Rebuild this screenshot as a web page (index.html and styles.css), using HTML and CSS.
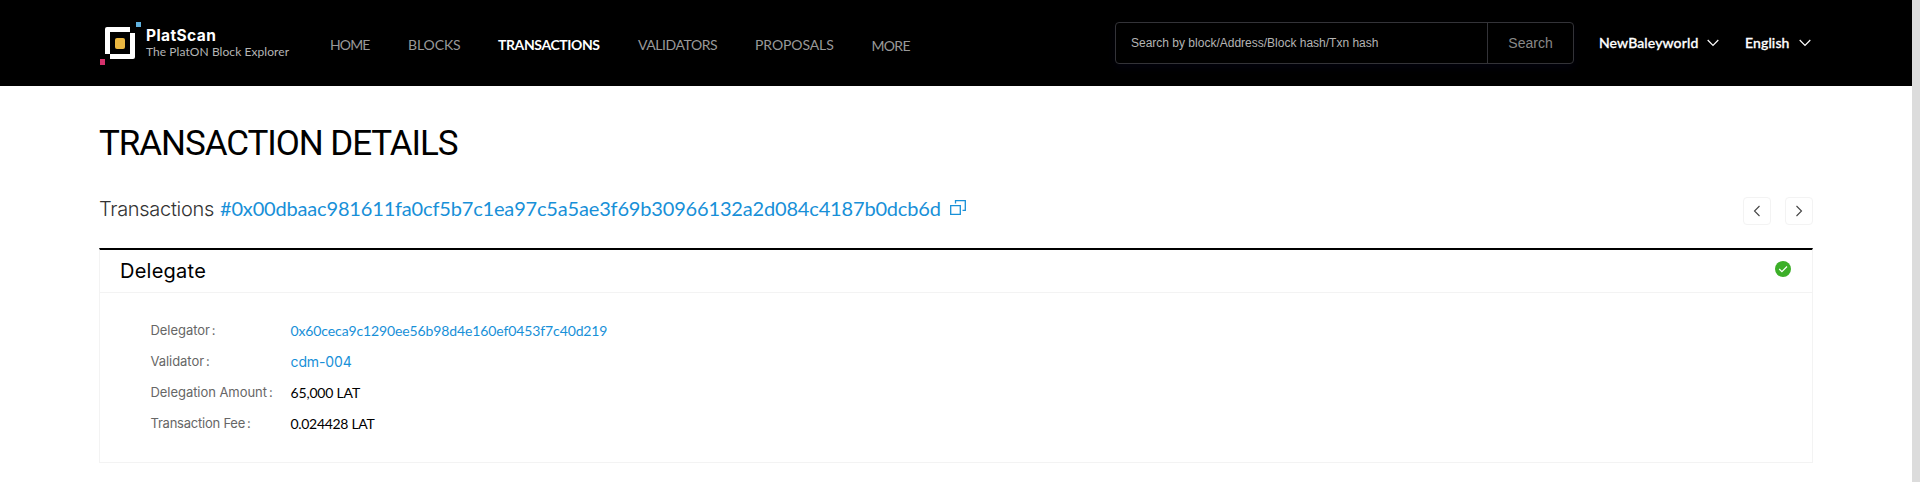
FILE: index.html
```html
<!DOCTYPE html>
<html lang="en">
<head>
<meta charset="utf-8">
<title>PlatScan - Transaction Details</title>
<link rel="stylesheet" href="styles.css">
</head>
<body>
<div class="viewport">
<div class="page">
  <header class="header">
    <a class="brand">
      <svg class="logo" width="42" height="44" viewBox="0 0 42 44">
        <path fill="#fff" d="M7 5h23v5H10v22H5V7q0-2 2-2z"/>
        <path fill="#fff" d="M30 11h5v24q0 2-2 2H10v-5h20z"/>
        <rect x="15" y="16" width="10" height="11" rx="2" fill="#ebb741"/>
        <path fill="#60b1df" d="M36 0h5v5h-5z"/>
        <path fill="#d4316b" d="M0 37h5v6H0z"/>
      </svg>
      <span class="brand-text"><b class="brand-name">PlatScan</b><span class="tagline">The PlatON Block Explorer</span></span>
    </a>
    <nav class="nav">
      <a class="home">HOME</a><a class="blocks">BLOCKS</a><a class="active">TRANSACTIONS</a><a class="validators">VALIDATORS</a><a class="proposals">PROPOSALS</a><a class="more">MORE</a>
    </nav>
    <div class="search">
      <span class="search-input">Search by block/Address/Block hash/Txn hash</span><span class="search-button">Search</span>
    </div>
    <div class="select network">NewBaleyworld<svg width="12" height="8" viewBox="0 0 12 8"><path d="M.7 1l5.3 5.5L11.300 1"/></svg></div>
    <div class="select language">English<svg width="12" height="8" viewBox="0 0 12 8"><path d="M.7 1l5.3 5.5L11.300 1"/></svg></div>
  </header>
  <main class="main">
    <h1 class="title">TRANSACTION DETAILS</h1>
    <div class="subject">
      <span class="subject-label">Transactions</span>
      <span class="subject-hash">#0x00dbaac981611fa0cf5b7c1ea97c5a5ae3f69b30966132a2d084c4187b0dcb6d</span>
      <svg class="copy" width="16" height="16" viewBox="0 0 16 16"><path d="M.7 5.700h9.600v8.600H.7zM5.500 3.500V.700h9.800v9.600h-2.800"/></svg>
      <span class="pager">
        <span class="pager-button"><svg width="8" height="12" viewBox="0 0 8 12"><path d="M6.500 1l-5 5 5 5"/></svg></span>
        <span class="pager-button"><svg width="8" height="12" viewBox="0 0 8 12"><path d="M1.500 1l5 5-5 5"/></svg></span>
      </span>
    </div>
    <section class="card">
      <div class="card-head">
        <h2 class="card-title">Delegate</h2>
        <svg class="status" width="16" height="16" viewBox="0 0 16 16"><circle cx="8" cy="8" r="8" fill="#3caf28"/><path d="M4.200 8l2.700 2.700L12 5.500" fill="none" stroke="#fff" stroke-width="1.200"/></svg>
      </div>
      <dl class="details">
        <dt>Delegator<i>:</i></dt><dd class="link v1">0x60ceca9c1290ee56b98d4e160ef0453f7c40d219</dd>
        <dt>Validator<i>:</i></dt><dd class="link v2">cdm-004</dd>
        <dt>Delegation Amount<i>:</i></dt><dd class="v3">65,000 LAT</dd>
        <dt class="k4">Transaction Fee<i>:</i></dt><dd class="v4">0.024428 LAT</dd>
      </dl>
    </section>
  </main>
</div>
<div class="scrollbar"></div>
</div>
</body>
</html>
```

FILE: styles.css
```css
* { box-sizing: border-box; }
body { margin: 0; background: #fff; font-family: Lato, "Open Sans", sans-serif; color: #000; }
.viewport { display: flex; height: 482px; overflow: hidden; }
.page { width: 1912px; }
.scrollbar { width: 8px; background: #dcdcdc; }

.header { display: flex; height: 86px; padding-left: 100px; background: #000; color: #fff; white-space: nowrap; }
.brand { display: flex; width: 230px; padding-top: 22px; }
.logo { flex: none; }
.brand-text { display: flex; flex-direction: column; padding: 4px 0 0 4px; }
.brand-name { padding-top: 1px; font-family: Inter, sans-serif; font-size: 15.500px; line-height: 17px; letter-spacing: .4px; }
.tagline { padding-top: 1px; font-size: 12px; line-height: 14px; color: #b5b5b5; letter-spacing: .07px; }
.nav { display: flex; width: 785px; padding-top: 35px; font-size: 14px; line-height: 20px; color: #999; }
.nav a { flex: none; }
.home { width: 78px; letter-spacing: -.87px; }
.blocks { width: 90px; letter-spacing: -.1px; }
.active { width: 140px; font-weight: 700; color: #fff; letter-spacing: -.4px; }
.validators { width: 117px; letter-spacing: -.44px; }
.proposals { width: 116.500px; letter-spacing: -.1px; }
.more { padding-top: 1px; letter-spacing: -.7px; }
.search { display: flex; width: 459px; height: 42px; margin-top: 22px; border: 1px solid #333338; border-radius: 4px; font-family: "Liberation Sans", Arial, sans-serif; line-height: 40px; box-shadow: 0 4px 8px #02020d; }
.search-input { width: 372px; padding-left: 15px; font-size: 12px; color: #b4b4b4; border-right: 1px solid #333338; }
.search-button { flex: 1; text-align: center; font-size: 14px; color: #888; }
.select { display: flex; align-items: center; justify-content: space-between; height: 20px; margin-top: 32px; font-size: 14px; font-weight: 500; letter-spacing: .12px; -webkit-text-stroke: .3px #fff; }
.select svg { margin-top: 2px; fill: none; stroke: #fff; stroke-width: 1.200; }
.network { width: 120px; margin-left: 25px; }
.language { width: 66px; margin-left: 26px; }

.main { width: 1714px; margin-left: 99px; }
.title { margin: 0; padding: 37px 0 0; font-family: Roboto, sans-serif; font-size: 35px; line-height: 42px; font-weight: 400; letter-spacing: -1.070px; }
.subject { display: flex; height: 83px; padding: 32px 0 0 1px; font-size: 20px; line-height: 24px; }
.subject-label { width: 120px; margin-left: -1px; margin-right: 1px; color: #333; font-family: Inter, sans-serif; font-weight: 300; letter-spacing: -.3px; }
.subject-hash { width: 730px; margin-top: -1px; color: #1890d8; letter-spacing: -.17px; }
.copy { margin-top: 3px; fill: none; stroke: #1890d8; stroke-width: 1.300; }
.pager { display: flex; gap: 14px; margin-left: auto; }
.pager-button { display: flex; align-items: center; justify-content: center; width: 28px; height: 28px; border: 1px solid #f3f3f3; border-radius: 4px; }
.pager-button svg { fill: none; stroke: #444; stroke-width: 1.100; }
.card { height: 215px; border: 1px solid #f3f3f3; border-top: 2px solid #000; }
.card-head { display: flex; justify-content: space-between; height: 43px; padding: 9px 21px 0 20px; border-bottom: 1px solid #f3f3f3; }
.card-title { margin: 0; font-family: Inter, sans-serif; font-size: 20px; line-height: 24px; font-weight: 400; letter-spacing: .25px; }
.status { margin-top: 2px; }
.details { display: grid; grid-template-columns: 140px auto; grid-auto-rows: 31px; margin: 0; padding: 22px 0 0 50.500px; line-height: 31px; }
.details dt { font-family: Inter, sans-serif; font-size: 13px; color: #666; letter-spacing: -.05px; }
.details i { font-style: normal; margin-left: 2px; }
.details dd { margin: 0; font-size: 14px; line-height: 32px; }
.details .link { color: #1890d8; }
.details .k4 { letter-spacing: -.23px; }
.v1 { letter-spacing: -.12px; }
.details .v2 { font-family: Inter, sans-serif; letter-spacing: -.12px; }
.v3 { letter-spacing: -.18px; }
.v4 { letter-spacing: -.31px; }
```
